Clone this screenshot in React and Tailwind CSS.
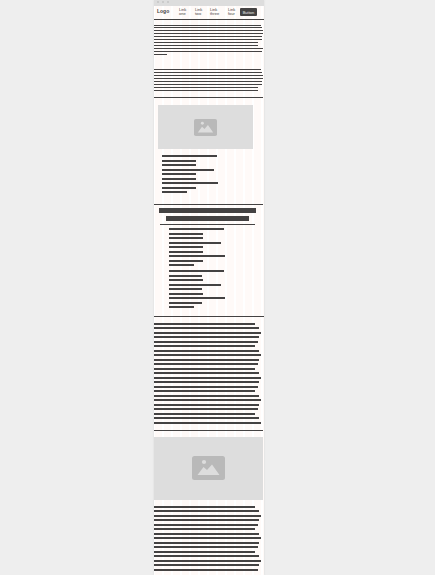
const PARAGRAPH = ["w-[101px]", "w-[105px]", "w-[107px]", "w-[105px]", "w-[104px]"];
const repeat = (count) => Array.from({ length: count }, (_, i) => PARAGRAPH[i % PARAGRAPH.length]);

const INTRO = ["w-[108px]", "w-[109px]", "w-[109px]", "w-[108px]", "w-[108px]", "w-[104px]", "w-[104px]", "w-[109px]", "w-[108px]", "w-[13px]"];
const SECOND = ["w-[107px]", "w-[108px]", "w-[109px]", "w-[109px]", "w-[108px]", "w-[108px]", "w-[104px]", "w-[104px]"];
const LIST = ["w-[55px]", "w-[34px]", "w-[34px]", "w-[52px]", "w-[34px]", "w-[34px]", "w-[56px]", "w-[34px]", "w-[25px]"];
const LIST_MORE = ["w-[55px]", "w-[33px]", "w-[34px]", "w-[52px]", "w-[33px]", "w-[34px]", "w-[56px]", "w-[33px]", "w-[25px]"];

function ThinLines({ widths, className = "" }) {
  return (
    <div className={`flex flex-col gap-[2px] ${className}`}>
      {widths.map((w, i) => (
        <div key={i} className={`h-px bg-[#444242] ${w}`} />
      ))}
    </div>
  );
}

function Lines({ widths, tightFirst = false, className = "" }) {
  const spacing = tightFirst ? "pb-[2px] even:pb-[3px]" : "pb-[3px] even:pb-[2px]";
  return (
    <div className={className}>
      {widths.map((w, i) => (
        <div key={i} className={spacing}>
          <div className={`h-[2px] bg-[#444242] ${w}`} />
        </div>
      ))}
    </div>
  );
}

function Rule({ className = "" }) {
  return <hr className={`h-px border-0 bg-[#444242] ${className}`} />;
}

function Picture({ className, iconClass }) {
  return (
    <div className={`flex justify-center bg-[#dddddd] ${className}`}>
      <svg viewBox="0 0 33 24" preserveAspectRatio="none" className={iconClass} aria-hidden="true">
        <rect width="33" height="24" rx="2.5" fill="#b9b9b9" />
        <circle cx="12" cy="6" r="2.1" fill="#dddddd" />
        <path d="M5.5 19 11.5 11 15 14 20 8.5 27.5 19Z" fill="#dddddd" />
      </svg>
    </div>
  );
}

const LINKS = [
  ["Link", "one", "w-[16px]"],
  ["Link", "two", "w-[15px]"],
  ["Link", "three", "w-[18px]"],
  ["Link", "four", "w-[12px]"],
];

export default function App() {
  return (
    <div className="flex min-h-screen justify-center bg-[#eeeeee] pr-[17px] font-['Liberation_Sans',Arial,sans-serif] text-[#444242]">
      <div className="w-[110px] bg-[repeating-linear-gradient(90deg,#ffffff_0px,#ffffff_1px,#fffaf8_1px,#fffaf8_8px,#ffffff_8px,#ffffff_9px)] shadow-[0_0_2px_#d8d8d8]">
        <div className="flex h-[6px] items-start gap-[3px] bg-[#dddddd] pt-px pl-[3px]">
          <span className="size-[2px] bg-[#cbcbcb]" />
          <span className="size-[2px] bg-[#cbcbcb]" />
          <span className="size-[2px] bg-[#cbcbcb]" />
        </div>
        <header className="flex h-[13px] items-start pt-[2px] pl-[3px]">
          <a href="#" className="w-[22px] text-[5px] leading-[6px] font-bold">Logo</a>
          <nav className="flex">
            {LINKS.map(([top, bottom, width]) => (
              <a key={bottom} href="#" className={`text-[4px] leading-[4px] ${width}`}>
                {top}
                <br />
                {bottom}
              </a>
            ))}
          </nav>
          <button type="button" className="h-[8px] w-[17px] rounded-[1px] bg-[#444242] pt-px text-[4px] leading-[7px] text-[#eeeeee]">
            Button
          </button>
        </header>
        <Rule />
        <main>
          <div className="mt-[5px] h-px w-[107px] bg-[#444242]" />
          <ThinLines widths={INTRO} className="mt-px" />
          <ThinLines widths={SECOND} className="mt-[14px]" />
          <Rule className="mt-[6px] mr-px" />
          <Picture className="mt-[7px] mr-[11px] ml-[4px] pt-[14px] pb-[13px]" iconClass="h-[17px] w-[23px]" />
          <Lines widths={LIST} className="mt-[6px] ml-[8px]" />
          <Rule className="mt-[8px] mr-px" />
          <div className="mt-[3px] mr-[8px] ml-[5px] h-[5px] bg-[#444242]" />
          <div className="mt-[3px] mr-[15px] ml-[12px] h-[5px] bg-[#444242]" />
          <Rule className="mt-[3px] mr-[9px] ml-[6px]" />
          <Lines widths={LIST} className="mt-[3px] ml-[15px]" />
          <Lines widths={LIST_MORE} className="mt-px ml-[15px]" />
          <Rule className="mt-[5px]" />
          <Lines widths={repeat(23)} tightFirst className="mt-[6px]" />
          <Rule className="mt-[4px] mr-px" />
          <Picture className="mt-[6px] mr-px pt-[19px] pb-[20px]" iconClass="h-[24px] w-[33px]" />
          <Lines widths={repeat(15)} tightFirst className="mt-[6px]" />
        </main>
      </div>
    </div>
  );
}
